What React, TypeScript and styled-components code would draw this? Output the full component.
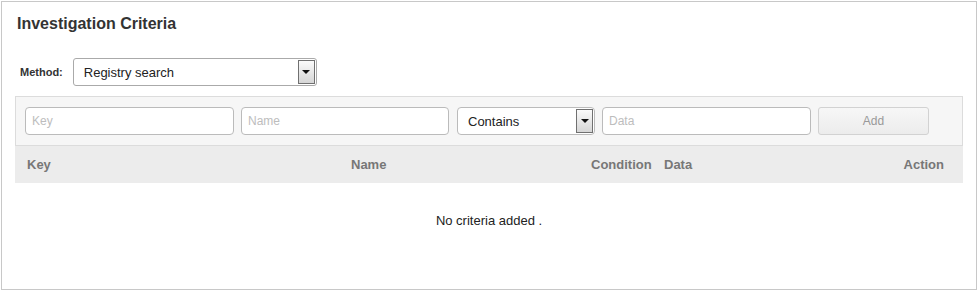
import styled, { createGlobalStyle } from 'styled-components';

const GlobalStyle = createGlobalStyle`
  html, body {
    margin: 0;
    padding: 0;
    background: #fff;
  }
  body {
    font-family: "Liberation Sans", Arial, sans-serif;
    color: #222;
  }
`;

const Panel = styled.div`
  box-sizing: border-box;
  margin: 1px 0 0 1px;
  width: 976px;
  height: 289px;
  border: 1px solid #c8c8c8;
  padding: 12px 13px 0 13px;
`;

const Title = styled.h2`
  margin: 0 0 0 2px;
  font-size: 16px;
  line-height: 20px;
  font-weight: bold;
  color: #333;
`;

const MethodRow = styled.div`
  display: flex;
  align-items: center;
  gap: 10px;
  margin: 24px 0 0 5px;
`;

const Label = styled.span`
  font-size: 11px;
  font-weight: bold;
  color: #333;
`;

const SelectBox = styled.div<{ width: number }>`
  box-sizing: border-box;
  display: flex;
  align-items: stretch;
  width: ${(props) => props.width + 'px'};
  height: 28px;
  border: 1px solid #aaa;
  border-radius: 3px;
  background: #fff;
`;

const SelectText = styled.span`
  flex: 1;
  display: flex;
  align-items: center;
  padding-left: 10px;
  font-size: 13px;
  color: #222;
`;

const ArrowButton = styled.span`
  box-sizing: border-box;
  width: 17px;
  margin: 1px 1px 1px 0;
  border: 1px solid #707070;
  background: linear-gradient(#fafafa, #d6d6d6);
  display: flex;
  align-items: center;
  justify-content: center;
  &::after {
    content: '';
    border-left: 4px solid transparent;
    border-right: 4px solid transparent;
    border-top: 4px solid #111;
  }
`;

const FilterBar = styled.div`
  box-sizing: border-box;
  display: flex;
  align-items: center;
  margin-top: 10px;
  height: 50px;
  padding: 0 9px;
  border: 1px solid #dcdcdc;
  background: #f6f6f6;
`;

const TextInput = styled.input<{ width: number; gapAfter: number }>`
  box-sizing: border-box;
  width: ${(props) => props.width + 'px'};
  height: 28px;
  margin-right: ${(props) => props.gapAfter + 'px'};
  padding: 0 6px;
  border: 1px solid #bbb;
  border-radius: 4px;
  background: #fff;
  font-family: "Liberation Sans", Arial, sans-serif;
  font-size: 12px;
  &::placeholder {
    color: #bdbdbd;
  }
`;

const FilterSelect = styled(SelectBox)`
  margin-right: 7px;
  border-color: #bbb;
  border-radius: 4px;
`;

const AddButton = styled.button`
  box-sizing: border-box;
  width: 111px;
  height: 28px;
  border: 1px solid #d2d2d2;
  border-radius: 3px;
  background: linear-gradient(#f7f7f7, #ececec);
  color: #999;
  font-family: "Liberation Sans", Arial, sans-serif;
  font-size: 12px;
`;

const HeaderRow = styled.div`
  display: grid;
  grid-template-columns: 324px 240px 73px 1fr auto;
  align-items: center;
  height: 37px;
  background: #ececec;
`;

const HeaderCell = styled.span<{ right?: boolean }>`
  padding: ${(props) => (props.right ? '0 19px 0 0' : '0 0 0 12px')};
  font-size: 13px;
  font-weight: bold;
  color: #777;
`;

const EmptyRow = styled.div`
  padding-top: 30px;
  text-align: center;
  font-size: 13px;
  color: #222;
`;

export default function App() {
  return (
    <>
      <GlobalStyle />
      <Panel>
        <Title>Investigation Criteria</Title>
        <MethodRow>
          <Label>Method:</Label>
          <SelectBox width={244}>
            <SelectText>Registry search</SelectText>
            <ArrowButton />
          </SelectBox>
        </MethodRow>
        <FilterBar>
          <TextInput placeholder="Key" width={209} gapAfter={7} />
          <TextInput placeholder="Name" width={208} gapAfter={8} />
          <FilterSelect width={138}>
            <SelectText>Contains</SelectText>
            <ArrowButton />
          </FilterSelect>
          <TextInput placeholder="Data" width={209} gapAfter={7} />
          <AddButton>Add</AddButton>
        </FilterBar>
        <HeaderRow>
          <HeaderCell>Key</HeaderCell>
          <HeaderCell>Name</HeaderCell>
          <HeaderCell>Condition</HeaderCell>
          <HeaderCell>Data</HeaderCell>
          <HeaderCell right>Action</HeaderCell>
        </HeaderRow>
        <EmptyRow>No criteria added .</EmptyRow>
      </Panel>
    </>
  );
}
